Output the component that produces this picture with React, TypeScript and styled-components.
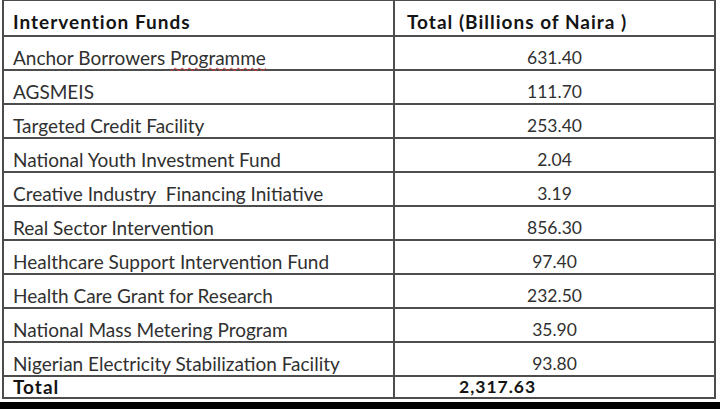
import React from "react";
import styled, { createGlobalStyle } from "styled-components";

const Global = createGlobalStyle`
  html, body { margin: 0; padding: 0; background: #ffffff; }
  body { width: 720px; height: 409px; overflow: hidden; font-family: Lato, "Open Sans", sans-serif; }
`;

const Page = styled.div`
  width: 720px;
  height: 409px;
  display: flex;
  flex-direction: column;
  background: #ffffff;
`;

const Grid = styled.div`
  margin-left: 2px;
  width: 714px;
  box-sizing: border-box;
  display: grid;
  grid-template-columns: 389px 319px;
  grid-template-rows: 34px repeat(10, 32px) 20px;
  gap: 2px;
  padding: 1px 2px 2px 2px;
  background: #4d4d4d;
`;

const Cell = styled.div<{ $align?: "left" | "center"; $bold?: boolean; $pad?: number; $kind?: "header" | "body" | "total"; $num?: boolean }>`
  background: #ffffff;
  display: flex;
  align-items: ${(p) => (p.$kind === "total" ? "center" : "flex-end")};
  justify-content: ${(p) => (p.$align === "center" ? "center" : "flex-start")};
  padding-left: ${(p) => p.$pad ?? 9}px;
  padding-bottom: ${(p) => (p.$kind === "header" ? 2 : 0)}px;
  box-sizing: border-box;
  font-size: ${(p) => (p.$num ? 17.5 : 19)}px;
  line-height: ${(p) => (p.$kind === "total" ? 18 : 22)}px;
  font-weight: ${(p) => (p.$bold ? 700 : 400)};
  letter-spacing: ${(p) => (p.$bold ? 1 : 0)}px;
  color: ${(p) => (p.$bold ? "#141414" : "#303030")};
  white-space: pre;
  min-width: 0;
`;

const Squiggle = styled.span`
  text-decoration: underline wavy #d03a3a;
  text-decoration-thickness: 1px;
  text-underline-offset: 2px;
`;

const BottomBar = styled.div`
  margin-top: auto;
  height: 7px;
  background: #000000;
`;

const rows: [React.ReactNode, string][] = [
  [<span>Anchor Borrowers <Squiggle>Programme</Squiggle></span>, "631.40"],
  ["AGSMEIS", "111.70"],
  ["Targeted Credit Facility", "253.40"],
  ["National Youth Investment Fund", "2.04"],
  ["Creative Industry  Financing Initiative", "3.19"],
  ["Real Sector Intervention", "856.30"],
  ["Healthcare Support Intervention Fund", "97.40"],
  ["Health Care Grant for Research", "232.50"],
  ["National Mass Metering Program", "35.90"],
  ["Nigerian Electricity Stabilization Facility", "93.80"],
];

export default function App() {
  return (
    <Page>
      <Global />
      <Grid>
        <Cell $bold $kind="header">Intervention Funds</Cell>
        <Cell $bold $kind="header" $pad={12}>Total (Billions of Naira )</Cell>
        {rows.map(([name, value], i) => (
          <React.Fragment key={i}>
            <Cell $kind="body">{name}</Cell>
            <Cell $kind="body" $align="center" $pad={0} $num>{value}</Cell>
          </React.Fragment>
        ))}
        <Cell $bold $kind="total">Total</Cell>
        <Cell $bold $kind="total" $pad={64} $num>2,317.63</Cell>
      </Grid>
      <BottomBar />
    </Page>
  );
}
